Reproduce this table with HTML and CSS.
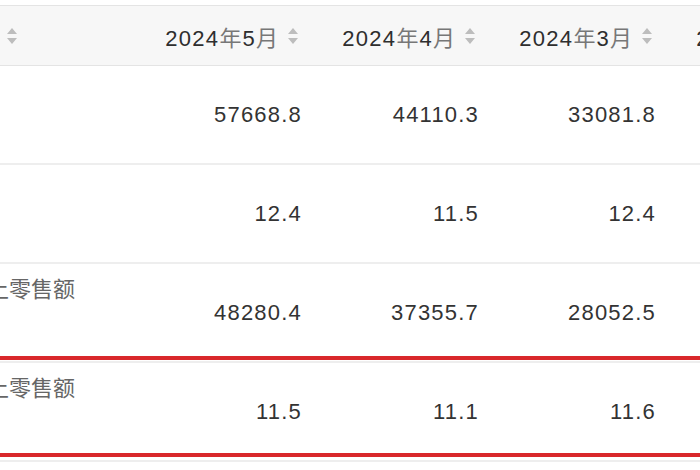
FILE: index.html
```html
<!DOCTYPE html>
<html lang="zh-CN">
<head>
    <meta charset="UTF-8">
    <title>网上零售额</title>
    <link rel="stylesheet" href="styles.css">
</head>
<body>
    <div class="table">
        <div class="row head">
            <div class="cell name-head">
                <span class="cjk">指标名称</span>
                <svg class="sort" viewBox="0 0 12 18"><path d="M6 1 L11 7 L1 7 Z M6 17 L11 11 L1 11 Z"/></svg>
            </div>
            <div class="cell">
                <span>2024<span class="cjk">年</span>5<span class="cjk">月</span></span>
                <svg class="sort" viewBox="0 0 12 18"><path d="M6 1 L11 7 L1 7 Z M6 17 L11 11 L1 11 Z"/></svg>
            </div>
            <div class="cell">
                <span>2024<span class="cjk">年</span>4<span class="cjk">月</span></span>
                <svg class="sort" viewBox="0 0 12 18"><path d="M6 1 L11 7 L1 7 Z M6 17 L11 11 L1 11 Z"/></svg>
            </div>
            <div class="cell">
                <span>2024<span class="cjk">年</span>3<span class="cjk">月</span></span>
                <svg class="sort" viewBox="0 0 12 18"><path d="M6 1 L11 7 L1 7 Z M6 17 L11 11 L1 11 Z"/></svg>
            </div>
            <div class="cell">
                <span>2024<span class="cjk">年</span>2<span class="cjk">月</span></span>
                <svg class="sort" viewBox="0 0 12 18"><path d="M6 1 L11 7 L1 7 Z M6 17 L11 11 L1 11 Z"/></svg>
            </div>
        </div>

        <div class="row">
            <div class="label"><span>网上零售额</span><span>累计值</span></div>
            <div class="cell">57668.8</div>
            <div class="cell">44110.3</div>
            <div class="cell">33081.8</div>
            <div class="cell">21520.8</div>
        </div>
        <div class="row">
            <div class="label"><span>网上零售额</span><span>累计增长</span></div>
            <div class="cell">12.4</div>
            <div class="cell">11.5</div>
            <div class="cell">12.4</div>
            <div class="cell">15.3</div>
        </div>
        <div class="row">
            <div class="label"><span>实物商品网上零售额</span><span>累计值</span></div>
            <div class="cell">48280.4</div>
            <div class="cell">37355.7</div>
            <div class="cell">28052.5</div>
            <div class="cell">17904.5</div>
        </div>
        <div class="row">
            <div class="label"><span>实物商品网上零售额</span><span>累计增长</span></div>
            <div class="cell">11.5</div>
            <div class="cell">11.1</div>
            <div class="cell">11.6</div>
            <div class="cell">14.4</div>
        </div>

        <!-- highlight drawn over the last row -->
        <div class="mark"></div>
    </div>
</body>
</html>
```

FILE: styles.css
```css
body {
    margin: 0;
    background: #fff;
    overflow: hidden;
    font-family: "Liberation Sans", "Noto Sans CJK SC", sans-serif;
    color: #333;
}
.table {
    position: relative;
    width: 981px;
    margin: 5px 0 0 -135px;
}
.row {
    display: grid;
    grid-template-columns: 273px repeat(4, 177px);
    height: 99px;
    box-sizing: border-box;
    border-bottom: 2px solid #eeeeee;
}
.row.head {
    height: 61px;
    background: #f7f7f7;
    border-top: 1px solid #e4e4e4;
    border-bottom: 1px solid #e4e4e4;
}
.cell {
    display: flex;
    align-items: center;
    justify-content: flex-end;
    padding: 0 13px;
    font-size: 22px;
    letter-spacing: 1.2px;
}
.head .cell {
    gap: 8px;
    padding-right: 16px;
    letter-spacing: 1.3px;
    color: #2e2e2e;
}
.head .name-head {
    justify-content: flex-start;
    padding-left: 41px;
}
.cjk {
    font-family: "Noto Sans CJK SC", sans-serif;
    color: #777;
    letter-spacing: 1px;
}
.sort {
    width: 12px;
    height: 18px;
    fill: #bdbdbd;
    flex-shrink: 0;
}
.label {
    display: flex;
    flex-direction: column;
    padding: 8px 12px 0;
    font-family: "Noto Sans CJK SC", sans-serif;
    font-size: 22px;
    line-height: 30px;
    color: #666;
    white-space: nowrap;
}
.mark {
    position: absolute;
    top: 351px;
    left: 120px;
    width: 740px;
    height: 101px;
    box-sizing: border-box;
    border-top: 4px solid #d9282b;
    border-bottom: 4px solid #d9282b;
    pointer-events: none;
}
```
